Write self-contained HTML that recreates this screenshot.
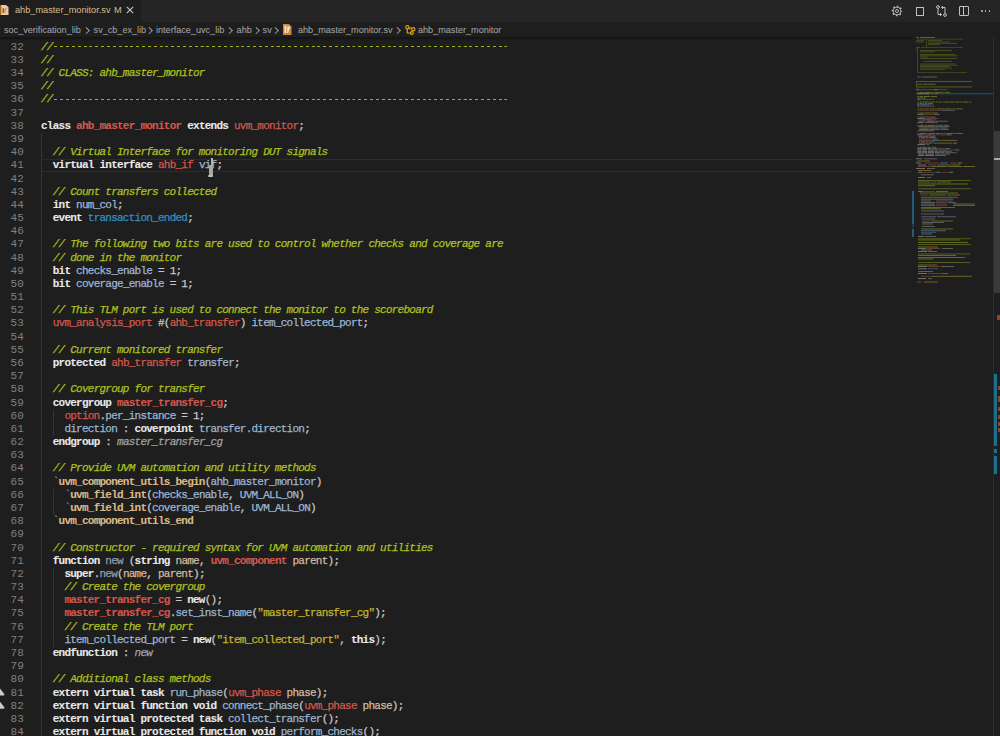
<!DOCTYPE html>
<html><head><meta charset="utf-8"><style>
html,body{margin:0;padding:0;width:1000px;height:736px;overflow:hidden;background:#1e1e1e;}
body{position:relative;font-family:"Liberation Sans",sans-serif;}
#tabs{position:absolute;left:0;top:0;width:1000px;height:22px;background:#252526;}
#tab{position:absolute;left:0;top:0;width:141px;height:22px;background:#1e1e1e;}
#crumbs{position:absolute;left:0;top:22px;width:1000px;height:15px;background:#1e1e1e;color:#a9a9a9;font-size:9.6px;white-space:nowrap;}
#shadow{position:absolute;left:0;top:36.5px;width:912px;height:4px;background:linear-gradient(#121212,#171717 40%,rgba(30,30,30,0));}
#code{position:absolute;left:0;top:0;width:1000px;height:736px;}
.ln{position:absolute;left:0;width:23.8px;text-align:right;font-family:"Liberation Mono",monospace;font-size:11px;line-height:13.18px;color:#808080;}
.cl{position:absolute;left:41px;font-family:"Liberation Mono",monospace;font-size:11px;line-height:13.18px;letter-spacing:-0.755px;color:#c8c8c8;white-space:pre;-webkit-text-stroke:0.25px currentColor;}
.c{color:#adc01e;font-style:italic;}
.k{color:#e8e8e8;font-weight:bold;-webkit-text-stroke:0.1px currentColor;}
.t{color:#d4574c;}
.tb{color:#d4574c;font-weight:bold;-webkit-text-stroke:0.1px currentColor;}
.v{color:#9db5d3;}
.e{color:#3190c4;}
.m{color:#dcb985;font-weight:bold;-webkit-text-stroke:0.1px currentColor;}
.bt{color:#808080;}
.s{color:#c8b330;}
.a{color:#d2b9a0;}
.f{color:#9cb4cf;}
.n{color:#8d9db0;}
.l{color:#a0a0a0;font-style:italic;}
.ig{position:absolute;width:1px;background:#353535;}
.curline{position:absolute;left:42px;width:870px;height:11px;border-top:1px solid #2c2c2c;border-bottom:1px solid #2c2c2c;}
.tabt{position:absolute;top:3.5px;font-size:9.2px;line-height:12px;color:#d9bd8e;white-space:nowrap;}
.bc{position:absolute;top:1.5px;font-size:9.1px;line-height:12px;color:#a9a9a9;white-space:nowrap;}
.chev{position:absolute;top:4.5px;width:3.5px;height:6px;}
.chev::before{content:"";position:absolute;left:-2.2px;top:1.3px;width:3.6px;height:3.6px;border-right:1px solid #a0a0a0;border-top:1px solid #a0a0a0;transform:rotate(45deg);}
.dash{display:inline-block;vertical-align:top;width:455.9px;height:13.18px;background:repeating-linear-gradient(90deg,transparent 0,transparent 1.3px,#9cb21d 1.5px,#9cb21d 4.4px,transparent 4.4px,transparent 5.845px) 0 5.4px/455.9px 1.3px no-repeat;}
#ruler{position:absolute;left:993px;top:37px;width:7px;height:699px;}

</style></head><body>
<div id="tabs">
  <div id="tab">
    <svg style="position:absolute;left:0;top:4.8px" width="9" height="10.3" viewBox="0 0 9 11" preserveAspectRatio="none">
      <path d="M0 0H6L8.5 2.5V11H0Z" fill="#e9c9a0"/>
      <rect x="0" y="0" width="1.2" height="11" fill="#8a7010"/>
      <path d="M2.5 3.5h1.6v5h-1.6z" fill="#b0453a"/>
      <path d="M5 3.5h1.8l-1.6 5h-1z" fill="#d09070"/>
    </svg>
    <span class="tabt" style="left:15px">ahb_master_monitor.sv</span>
    <span class="tabt" style="left:114px">M</span>
    <svg style="position:absolute;left:126px;top:6px" width="8" height="8" viewBox="0 0 8 8"><path d="M0.8 0.8L7.2 7.2M7.2 0.8L0.8 7.2" stroke="#c5c5c5" stroke-width="1.1"/></svg>
  </div>
  <svg style="position:absolute;left:891px;top:4.5px" width="12" height="12" viewBox="0 0 12 12">
    <g fill="none" stroke="#c0c0c0">
      <circle cx="6" cy="6" r="3.9" stroke-width="0.9"/>
      <circle cx="6" cy="6" r="4.7" stroke-width="1.3" stroke-dasharray="1.5 2.19" stroke-dashoffset="0.7"/>
      <circle cx="6" cy="6" r="1.5" stroke-width="0.9"/>
    </g>
  </svg>
  <div style="position:absolute;left:915.5px;top:6.5px;width:6.5px;height:7px;border:1px solid #c0c0c0"></div>
  <svg style="position:absolute;left:936px;top:5px" width="11" height="12" viewBox="0 0 11 12">
    <g fill="none" stroke="#c0c0c0" stroke-width="1">
      <circle cx="2" cy="2" r="1.4"/><circle cx="9" cy="10" r="1.4"/>
      <path d="M2 3.4V9.5H5.5M4 8l1.5 1.5L4 11"/>
      <path d="M9 8.6V2.5H5.5M7 4L5.5 2.5 7 1"/>
    </g>
  </svg>
  <div style="position:absolute;left:958.5px;top:5.5px;width:8.5px;height:8.5px;border:1px solid #c0c0c0;border-radius:1px"></div>
  <div style="position:absolute;left:963.2px;top:6px;width:1px;height:9px;background:#c0c0c0"></div>
  <div style="position:absolute;left:981px;top:10px;width:1.6px;height:1.6px;background:#c0c0c0;border-radius:1px"></div>
  <div style="position:absolute;left:984.8px;top:10px;width:1.6px;height:1.6px;background:#c0c0c0;border-radius:1px"></div>
  <div style="position:absolute;left:988.6px;top:10px;width:1.6px;height:1.6px;background:#c0c0c0;border-radius:1px"></div>
</div>
<div id="crumbs">
  <span class="bc" style="left:4px">soc_verification_lib</span>
  <span class="chev" style="left:86.5px"></span>
  <span class="bc" style="left:93.6px">sv_cb_ex_lib</span>
  <span class="chev" style="left:149px"></span>
  <span class="bc" style="left:156px">interface_uvc_lib</span>
  <span class="chev" style="left:229px"></span>
  <span class="bc" style="left:236.6px">ahb</span>
  <span class="chev" style="left:256px"></span>
  <span class="bc" style="left:262.6px">sv</span>
  <span class="chev" style="left:275px"></span>
  <svg style="position:absolute;left:283px;top:2px" width="8.5" height="11" viewBox="0 0 8.5 11">
    <path d="M0 0H6L8.5 2.5V11H0Z" fill="#c98540"/>
    <path d="M1.5 1.5h1.8v7.5h-1.8z" fill="#f5e6d0"/>
    <path d="M4.2 2.5h3l-2 6.5h-1z" fill="#f5e6d0"/>
  </svg>
  <span class="bc" style="left:298px">ahb_master_monitor.sv</span>
  <span class="chev" style="left:397.5px"></span>
  <svg style="position:absolute;left:405px;top:2.5px" width="11" height="10" viewBox="0 0 11 10">
    <g fill="none" stroke="#d6a51a" stroke-width="1.2">
      <circle cx="2.3" cy="2.3" r="1.6"/><circle cx="8.3" cy="4.3" r="1.6"/><circle cx="6.8" cy="8" r="1.4"/>
      <path d="M3.8 3H6.8M2.3 4V8H5.4"/>
    </g>
    <rect x="3.5" y="3.5" width="3" height="0.8" fill="#e07060"/>
  </svg>
  <span class="bc" style="left:418px">ahb_master_monitor</span>
</div>
<div id="shadow"></div>
<svg style="position:absolute;left:0;top:0" width="6" height="736">
  <path d="M0 688.5L4.5 694.2L4 695.5H0Z" fill="#c6cbd2"/>
  <path d="M0 701.7L4.5 707.4L4 708.7H0Z" fill="#c6cbd2"/>
</svg>

<div id="code">
<div class="ig" style="left:41.00px;top:132.96px;height:606.28px"></div><div class="ig" style="left:52.69px;top:409.74px;height:26.36px"></div><div class="ig" style="left:52.69px;top:488.82px;height:26.36px"></div><div class="ig" style="left:52.69px;top:567.90px;height:79.08px"></div>
<div class="curline" style="top:158.72px"></div>
<div class="ln" style="top:40.70px">32</div><div class="cl" style="top:40.70px"><span class="c">//</span><span class="dash"></span></div><div class="ln" style="top:53.88px">33</div><div class="cl" style="top:53.88px"><span class="c">//</span></div><div class="ln" style="top:67.06px">34</div><div class="cl" style="top:67.06px"><span class="c">// CLASS: ahb_master_monitor</span></div><div class="ln" style="top:80.24px">35</div><div class="cl" style="top:80.24px"><span class="c">//</span></div><div class="ln" style="top:93.42px">36</div><div class="cl" style="top:93.42px"><span class="c">//</span><span class="dash"></span></div><div class="ln" style="top:106.60px">37</div><div class="cl" style="top:106.60px"></div><div class="ln" style="top:119.78px">38</div><div class="cl" style="top:119.78px"><span class="k">class</span> <span class="tb">ahb_master_monitor</span> <span class="k">extends</span> <span class="t">uvm_monitor</span>;</div><div class="ln" style="top:132.96px">39</div><div class="cl" style="top:132.96px"></div><div class="ln" style="top:146.14px">40</div><div class="cl" style="top:146.14px">  <span class="c">// Virtual Interface for monitoring DUT signals</span></div><div class="ln" style="top:159.32px">41</div><div class="cl" style="top:159.32px">  <span class="k">virtual</span> <span class="k">interface</span> <span class="t">ahb_if</span> <span class="v">vif</span>;</div><div class="ln" style="top:172.50px">42</div><div class="cl" style="top:172.50px"></div><div class="ln" style="top:185.68px">43</div><div class="cl" style="top:185.68px">  <span class="c">// Count transfers collected</span></div><div class="ln" style="top:198.86px">44</div><div class="cl" style="top:198.86px">  <span class="k">int</span> <span class="v">num_col</span>;</div><div class="ln" style="top:212.04px">45</div><div class="cl" style="top:212.04px">  <span class="k">event</span> <span class="e">transaction_ended</span>;</div><div class="ln" style="top:225.22px">46</div><div class="cl" style="top:225.22px"></div><div class="ln" style="top:238.40px">47</div><div class="cl" style="top:238.40px">  <span class="c">// The following two bits are used to control whether checks and coverage are</span></div><div class="ln" style="top:251.58px">48</div><div class="cl" style="top:251.58px">  <span class="c">// done in the monitor</span></div><div class="ln" style="top:264.76px">49</div><div class="cl" style="top:264.76px">  <span class="k">bit</span> <span class="v">checks_enable</span> = 1;</div><div class="ln" style="top:277.94px">50</div><div class="cl" style="top:277.94px">  <span class="k">bit</span> <span class="v">coverage_enable</span> = 1;</div><div class="ln" style="top:291.12px">51</div><div class="cl" style="top:291.12px"></div><div class="ln" style="top:304.30px">52</div><div class="cl" style="top:304.30px">  <span class="c">// This TLM port is used to connect the monitor to the scoreboard</span></div><div class="ln" style="top:317.48px">53</div><div class="cl" style="top:317.48px">  <span class="t">uvm_analysis_port</span> #(<span class="t">ahb_transfer</span>) <span class="v">item_collected_port</span>;</div><div class="ln" style="top:330.66px">54</div><div class="cl" style="top:330.66px"></div><div class="ln" style="top:343.84px">55</div><div class="cl" style="top:343.84px">  <span class="c">// Current monitored transfer</span></div><div class="ln" style="top:357.02px">56</div><div class="cl" style="top:357.02px">  <span class="k">protected</span> <span class="t">ahb_transfer</span> <span class="v">transfer</span>;</div><div class="ln" style="top:370.20px">57</div><div class="cl" style="top:370.20px"></div><div class="ln" style="top:383.38px">58</div><div class="cl" style="top:383.38px">  <span class="c">// Covergroup for transfer</span></div><div class="ln" style="top:396.56px">59</div><div class="cl" style="top:396.56px">  <span class="k">covergroup</span> <span class="tb">master_transfer_cg</span>;</div><div class="ln" style="top:409.74px">60</div><div class="cl" style="top:409.74px">    <span class="t">option</span>.<span class="v">per_instance</span> = 1;</div><div class="ln" style="top:422.92px">61</div><div class="cl" style="top:422.92px">    <span class="v">direction</span> : <span class="k">coverpoint</span> <span class="v">transfer.direction</span>;</div><div class="ln" style="top:436.10px">62</div><div class="cl" style="top:436.10px">  <span class="k">endgroup</span> : <span class="l">master_transfer_cg</span></div><div class="ln" style="top:449.28px">63</div><div class="cl" style="top:449.28px"></div><div class="ln" style="top:462.46px">64</div><div class="cl" style="top:462.46px">  <span class="c">// Provide UVM automation and utility methods</span></div><div class="ln" style="top:475.64px">65</div><div class="cl" style="top:475.64px">  <span class="bt">`</span><span class="m">uvm_component_utils_begin</span>(<span class="v">ahb_master_monitor</span>)</div><div class="ln" style="top:488.82px">66</div><div class="cl" style="top:488.82px">    <span class="bt">`</span><span class="m">uvm_field_int</span>(<span class="v">checks_enable</span>, <span class="v">UVM_ALL_ON</span>)</div><div class="ln" style="top:502.00px">67</div><div class="cl" style="top:502.00px">    <span class="bt">`</span><span class="m">uvm_field_int</span>(<span class="v">coverage_enable</span>, <span class="v">UVM_ALL_ON</span>)</div><div class="ln" style="top:515.18px">68</div><div class="cl" style="top:515.18px">  <span class="bt">`</span><span class="m">uvm_component_utils_end</span></div><div class="ln" style="top:528.36px">69</div><div class="cl" style="top:528.36px"></div><div class="ln" style="top:541.54px">70</div><div class="cl" style="top:541.54px">  <span class="c">// Constructor - required syntax for UVM automation and utilities</span></div><div class="ln" style="top:554.72px">71</div><div class="cl" style="top:554.72px">  <span class="k">function</span> <span class="n">new</span> (<span class="k">string</span> <span class="a">name</span>, <span class="tb">uvm_component</span> <span class="a">parent</span>);</div><div class="ln" style="top:567.90px">72</div><div class="cl" style="top:567.90px">    <span class="k">super</span>.<span class="n">new</span>(<span class="a">name</span>, <span class="a">parent</span>);</div><div class="ln" style="top:581.08px">73</div><div class="cl" style="top:581.08px">    <span class="c">// Create the covergroup</span></div><div class="ln" style="top:594.26px">74</div><div class="cl" style="top:594.26px">    <span class="tb">master_transfer_cg</span> = <span class="k">new</span>();</div><div class="ln" style="top:607.44px">75</div><div class="cl" style="top:607.44px">    <span class="tb">master_transfer_cg</span>.<span class="f">set_inst_name</span>(<span class="s">&quot;master_transfer_cg&quot;</span>);</div><div class="ln" style="top:620.62px">76</div><div class="cl" style="top:620.62px">    <span class="c">// Create the TLM port</span></div><div class="ln" style="top:633.80px">77</div><div class="cl" style="top:633.80px">    <span class="v">item_collected_port</span> = <span class="k">new</span>(<span class="s">&quot;item_collected_port&quot;</span>, <span class="k">this</span>);</div><div class="ln" style="top:646.98px">78</div><div class="cl" style="top:646.98px">  <span class="k">endfunction</span> : <span class="l">new</span></div><div class="ln" style="top:660.16px">79</div><div class="cl" style="top:660.16px"></div><div class="ln" style="top:673.34px">80</div><div class="cl" style="top:673.34px">  <span class="c">// Additional class methods</span></div><div class="ln" style="top:686.52px">81</div><div class="cl" style="top:686.52px">  <span class="k">extern virtual task</span> <span class="f">run_phase</span>(<span class="t">uvm_phase</span> <span class="a">phase</span>);</div><div class="ln" style="top:699.70px">82</div><div class="cl" style="top:699.70px">  <span class="k">extern virtual function void</span> <span class="f">connect_phase</span>(<span class="t">uvm_phase</span> <span class="a">phase</span>);</div><div class="ln" style="top:712.88px">83</div><div class="cl" style="top:712.88px">  <span class="k">extern virtual protected task</span> <span class="f">collect_transfer</span>();</div><div class="ln" style="top:726.06px">84</div><div class="cl" style="top:726.06px">  <span class="k">extern virtual protected function void</span> <span class="f">perform_checks</span>();</div>
</div>
<svg id="mm" width="1000" height="736" style="position:absolute;left:0;top:0"><rect x="916" y="93.1" width="77" height="1.3" fill="#22466a"/><g opacity="0.62"><rect x="916.00" y="80.99" width="1.40" height="0.95" fill="#8ea21c"/><rect x="917.40" y="81.07" width="54.60" height="0.8" fill="#8a9e1a"/><rect x="916.00" y="82.36" width="1.40" height="0.95" fill="#8ea21c"/><rect x="916.00" y="83.73" width="1.40" height="0.95" fill="#8ea21c"/><rect x="918.10" y="83.73" width="4.20" height="0.95" fill="#8ea21c"/><rect x="923.00" y="83.73" width="12.60" height="0.95" fill="#8ea21c"/><rect x="916.00" y="85.10" width="1.40" height="0.95" fill="#8ea21c"/><rect x="916.00" y="86.47" width="1.40" height="0.95" fill="#8ea21c"/><rect x="917.40" y="86.55" width="54.60" height="0.8" fill="#8a9e1a"/><rect x="916.00" y="89.21" width="3.50" height="0.95" fill="#a8a8a8"/><rect x="920.20" y="89.21" width="12.60" height="0.95" fill="#a44a40"/><rect x="933.50" y="89.21" width="4.90" height="0.95" fill="#a8a8a8"/><rect x="939.10" y="89.21" width="7.70" height="0.95" fill="#a44a40"/><rect x="946.80" y="89.21" width="0.70" height="0.95" fill="#8a8a8a"/><rect x="917.40" y="91.95" width="1.40" height="0.95" fill="#8ea21c"/><rect x="919.50" y="91.95" width="4.90" height="0.95" fill="#8ea21c"/><rect x="925.10" y="91.95" width="6.30" height="0.95" fill="#8ea21c"/><rect x="932.10" y="91.95" width="2.10" height="0.95" fill="#8ea21c"/><rect x="934.90" y="91.95" width="7.00" height="0.95" fill="#8ea21c"/><rect x="942.60" y="91.95" width="2.10" height="0.95" fill="#8ea21c"/><rect x="945.40" y="91.95" width="4.90" height="0.95" fill="#8ea21c"/><rect x="917.40" y="93.32" width="4.90" height="0.95" fill="#a8a8a8"/><rect x="923.00" y="93.32" width="6.30" height="0.95" fill="#a8a8a8"/><rect x="930.00" y="93.32" width="4.20" height="0.95" fill="#a44a40"/><rect x="934.90" y="93.32" width="2.10" height="0.95" fill="#7a8ea5"/><rect x="937.00" y="93.32" width="0.70" height="0.95" fill="#8a8a8a"/><rect x="917.40" y="96.06" width="1.40" height="0.95" fill="#8ea21c"/><rect x="919.50" y="96.06" width="3.50" height="0.95" fill="#8ea21c"/><rect x="923.70" y="96.06" width="6.30" height="0.95" fill="#8ea21c"/><rect x="930.70" y="96.06" width="6.30" height="0.95" fill="#8ea21c"/><rect x="917.40" y="97.43" width="2.10" height="0.95" fill="#a8a8a8"/><rect x="920.20" y="97.43" width="4.90" height="0.95" fill="#7a8ea5"/><rect x="925.10" y="97.43" width="0.70" height="0.95" fill="#8a8a8a"/><rect x="917.40" y="98.80" width="3.50" height="0.95" fill="#a8a8a8"/><rect x="921.60" y="98.80" width="11.90" height="0.95" fill="#3a7fb0"/><rect x="933.50" y="98.80" width="0.70" height="0.95" fill="#8a8a8a"/><rect x="917.40" y="101.54" width="1.40" height="0.95" fill="#8ea21c"/><rect x="919.50" y="101.54" width="2.10" height="0.95" fill="#8ea21c"/><rect x="922.30" y="101.54" width="6.30" height="0.95" fill="#8ea21c"/><rect x="929.30" y="101.54" width="2.10" height="0.95" fill="#8ea21c"/><rect x="932.10" y="101.54" width="2.80" height="0.95" fill="#8ea21c"/><rect x="935.60" y="101.54" width="2.10" height="0.95" fill="#8ea21c"/><rect x="938.40" y="101.54" width="2.80" height="0.95" fill="#8ea21c"/><rect x="941.90" y="101.54" width="1.40" height="0.95" fill="#8ea21c"/><rect x="944.00" y="101.54" width="4.90" height="0.95" fill="#8ea21c"/><rect x="949.60" y="101.54" width="4.90" height="0.95" fill="#8ea21c"/><rect x="955.20" y="101.54" width="4.20" height="0.95" fill="#8ea21c"/><rect x="960.10" y="101.54" width="2.10" height="0.95" fill="#8ea21c"/><rect x="962.90" y="101.54" width="5.60" height="0.95" fill="#8ea21c"/><rect x="969.20" y="101.54" width="2.10" height="0.95" fill="#8ea21c"/><rect x="917.40" y="102.91" width="1.40" height="0.95" fill="#8ea21c"/><rect x="919.50" y="102.91" width="2.80" height="0.95" fill="#8ea21c"/><rect x="923.00" y="102.91" width="1.40" height="0.95" fill="#8ea21c"/><rect x="925.10" y="102.91" width="2.10" height="0.95" fill="#8ea21c"/><rect x="927.90" y="102.91" width="4.90" height="0.95" fill="#8ea21c"/><rect x="917.40" y="104.28" width="2.10" height="0.95" fill="#a8a8a8"/><rect x="920.20" y="104.28" width="9.10" height="0.95" fill="#7a8ea5"/><rect x="930.00" y="104.28" width="0.70" height="0.95" fill="#8a8a8a"/><rect x="931.40" y="104.28" width="1.40" height="0.95" fill="#8a8a8a"/><rect x="917.40" y="105.65" width="2.10" height="0.95" fill="#a8a8a8"/><rect x="920.20" y="105.65" width="10.50" height="0.95" fill="#7a8ea5"/><rect x="931.40" y="105.65" width="0.70" height="0.95" fill="#8a8a8a"/><rect x="932.80" y="105.65" width="1.40" height="0.95" fill="#8a8a8a"/><rect x="917.40" y="108.39" width="1.40" height="0.95" fill="#8ea21c"/><rect x="919.50" y="108.39" width="2.80" height="0.95" fill="#8ea21c"/><rect x="923.00" y="108.39" width="2.10" height="0.95" fill="#8ea21c"/><rect x="925.80" y="108.39" width="2.80" height="0.95" fill="#8ea21c"/><rect x="929.30" y="108.39" width="1.40" height="0.95" fill="#8ea21c"/><rect x="931.40" y="108.39" width="2.80" height="0.95" fill="#8ea21c"/><rect x="934.90" y="108.39" width="1.40" height="0.95" fill="#8ea21c"/><rect x="937.00" y="108.39" width="4.90" height="0.95" fill="#8ea21c"/><rect x="942.60" y="108.39" width="2.10" height="0.95" fill="#8ea21c"/><rect x="945.40" y="108.39" width="4.90" height="0.95" fill="#8ea21c"/><rect x="951.00" y="108.39" width="1.40" height="0.95" fill="#8ea21c"/><rect x="953.10" y="108.39" width="2.10" height="0.95" fill="#8ea21c"/><rect x="955.90" y="108.39" width="7.00" height="0.95" fill="#8ea21c"/><rect x="917.40" y="109.76" width="11.90" height="0.95" fill="#a44a40"/><rect x="930.00" y="109.76" width="1.40" height="0.95" fill="#8a8a8a"/><rect x="931.40" y="109.76" width="8.40" height="0.95" fill="#a44a40"/><rect x="939.80" y="109.76" width="0.70" height="0.95" fill="#8a8a8a"/><rect x="941.20" y="109.76" width="13.30" height="0.95" fill="#7a8ea5"/><rect x="954.50" y="109.76" width="0.70" height="0.95" fill="#8a8a8a"/><rect x="917.40" y="112.50" width="1.40" height="0.95" fill="#8ea21c"/><rect x="919.50" y="112.50" width="4.90" height="0.95" fill="#8ea21c"/><rect x="925.10" y="112.50" width="6.30" height="0.95" fill="#8ea21c"/><rect x="932.10" y="112.50" width="5.60" height="0.95" fill="#8ea21c"/><rect x="917.40" y="113.87" width="6.30" height="0.95" fill="#a8a8a8"/><rect x="924.40" y="113.87" width="8.40" height="0.95" fill="#a44a40"/><rect x="933.50" y="113.87" width="5.60" height="0.95" fill="#7a8ea5"/><rect x="939.10" y="113.87" width="0.70" height="0.95" fill="#8a8a8a"/><rect x="917.40" y="116.61" width="1.40" height="0.95" fill="#8ea21c"/><rect x="919.50" y="116.61" width="7.00" height="0.95" fill="#8ea21c"/><rect x="927.20" y="116.61" width="2.10" height="0.95" fill="#8ea21c"/><rect x="930.00" y="116.61" width="5.60" height="0.95" fill="#8ea21c"/><rect x="917.40" y="117.98" width="7.00" height="0.95" fill="#a8a8a8"/><rect x="925.10" y="117.98" width="12.60" height="0.95" fill="#a44a40"/><rect x="937.70" y="117.98" width="0.70" height="0.95" fill="#8a8a8a"/><rect x="918.80" y="119.35" width="4.20" height="0.95" fill="#a44a40"/><rect x="923.00" y="119.35" width="0.70" height="0.95" fill="#8a8a8a"/><rect x="923.70" y="119.35" width="8.40" height="0.95" fill="#7a8ea5"/><rect x="932.80" y="119.35" width="0.70" height="0.95" fill="#8a8a8a"/><rect x="934.20" y="119.35" width="1.40" height="0.95" fill="#8a8a8a"/><rect x="918.80" y="120.72" width="6.30" height="0.95" fill="#7a8ea5"/><rect x="925.80" y="120.72" width="0.70" height="0.95" fill="#8a8a8a"/><rect x="927.20" y="120.72" width="7.00" height="0.95" fill="#a8a8a8"/><rect x="934.90" y="120.72" width="12.60" height="0.95" fill="#7a8ea5"/><rect x="947.50" y="120.72" width="0.70" height="0.95" fill="#8a8a8a"/><rect x="917.40" y="122.09" width="5.60" height="0.95" fill="#a8a8a8"/><rect x="923.70" y="122.09" width="0.70" height="0.95" fill="#8a8a8a"/><rect x="925.10" y="122.09" width="12.60" height="0.95" fill="#808080"/><rect x="917.40" y="124.83" width="1.40" height="0.95" fill="#8ea21c"/><rect x="919.50" y="124.83" width="4.90" height="0.95" fill="#8ea21c"/><rect x="925.10" y="124.83" width="2.10" height="0.95" fill="#8ea21c"/><rect x="927.90" y="124.83" width="7.00" height="0.95" fill="#8ea21c"/><rect x="935.60" y="124.83" width="2.10" height="0.95" fill="#8ea21c"/><rect x="938.40" y="124.83" width="4.90" height="0.95" fill="#8ea21c"/><rect x="944.00" y="124.83" width="4.90" height="0.95" fill="#8ea21c"/><rect x="917.40" y="126.20" width="0.70" height="0.95" fill="#666"/><rect x="918.10" y="126.20" width="17.50" height="0.95" fill="#a8906a"/><rect x="935.60" y="126.20" width="0.70" height="0.95" fill="#8a8a8a"/><rect x="936.30" y="126.20" width="12.60" height="0.95" fill="#7a8ea5"/><rect x="948.90" y="126.20" width="0.70" height="0.95" fill="#8a8a8a"/><rect x="918.80" y="127.57" width="0.70" height="0.95" fill="#666"/><rect x="919.50" y="127.57" width="9.10" height="0.95" fill="#a8906a"/><rect x="928.60" y="127.57" width="0.70" height="0.95" fill="#8a8a8a"/><rect x="929.30" y="127.57" width="9.10" height="0.95" fill="#7a8ea5"/><rect x="938.40" y="127.57" width="0.70" height="0.95" fill="#8a8a8a"/><rect x="939.80" y="127.57" width="7.00" height="0.95" fill="#7a8ea5"/><rect x="946.80" y="127.57" width="0.70" height="0.95" fill="#8a8a8a"/><rect x="918.80" y="128.94" width="0.70" height="0.95" fill="#666"/><rect x="919.50" y="128.94" width="9.10" height="0.95" fill="#a8906a"/><rect x="928.60" y="128.94" width="0.70" height="0.95" fill="#8a8a8a"/><rect x="929.30" y="128.94" width="10.50" height="0.95" fill="#7a8ea5"/><rect x="939.80" y="128.94" width="0.70" height="0.95" fill="#8a8a8a"/><rect x="941.20" y="128.94" width="7.00" height="0.95" fill="#7a8ea5"/><rect x="948.20" y="128.94" width="0.70" height="0.95" fill="#8a8a8a"/><rect x="917.40" y="130.31" width="0.70" height="0.95" fill="#666"/><rect x="918.10" y="130.31" width="16.10" height="0.95" fill="#a8906a"/><rect x="917.40" y="133.05" width="1.40" height="0.95" fill="#8ea21c"/><rect x="919.50" y="133.05" width="7.70" height="0.95" fill="#8ea21c"/><rect x="927.90" y="133.05" width="0.70" height="0.95" fill="#8ea21c"/><rect x="929.30" y="133.05" width="5.60" height="0.95" fill="#8ea21c"/><rect x="935.60" y="133.05" width="4.20" height="0.95" fill="#8ea21c"/><rect x="940.50" y="133.05" width="2.10" height="0.95" fill="#8ea21c"/><rect x="943.30" y="133.05" width="2.10" height="0.95" fill="#8ea21c"/><rect x="946.10" y="133.05" width="7.00" height="0.95" fill="#8ea21c"/><rect x="953.80" y="133.05" width="2.10" height="0.95" fill="#8ea21c"/><rect x="956.60" y="133.05" width="6.30" height="0.95" fill="#8ea21c"/><rect x="917.40" y="134.42" width="5.60" height="0.95" fill="#a8a8a8"/><rect x="923.70" y="134.42" width="2.10" height="0.95" fill="#7a8ea5"/><rect x="926.50" y="134.42" width="0.70" height="0.95" fill="#8a8a8a"/><rect x="927.20" y="134.42" width="4.20" height="0.95" fill="#a8a8a8"/><rect x="932.10" y="134.42" width="2.80" height="0.95" fill="#a09080"/><rect x="934.90" y="134.42" width="0.70" height="0.95" fill="#8a8a8a"/><rect x="936.30" y="134.42" width="9.10" height="0.95" fill="#a44a40"/><rect x="946.10" y="134.42" width="4.20" height="0.95" fill="#a09080"/><rect x="950.30" y="134.42" width="1.40" height="0.95" fill="#8a8a8a"/><rect x="918.80" y="135.79" width="3.50" height="0.95" fill="#a8a8a8"/><rect x="922.30" y="135.79" width="0.70" height="0.95" fill="#8a8a8a"/><rect x="923.00" y="135.79" width="2.10" height="0.95" fill="#7a8ea5"/><rect x="925.10" y="135.79" width="0.70" height="0.95" fill="#8a8a8a"/><rect x="925.80" y="135.79" width="2.80" height="0.95" fill="#a09080"/><rect x="928.60" y="135.79" width="0.70" height="0.95" fill="#8a8a8a"/><rect x="930.00" y="135.79" width="4.20" height="0.95" fill="#a09080"/><rect x="934.20" y="135.79" width="1.40" height="0.95" fill="#8a8a8a"/><rect x="918.80" y="137.16" width="1.40" height="0.95" fill="#8ea21c"/><rect x="920.90" y="137.16" width="4.20" height="0.95" fill="#8ea21c"/><rect x="925.80" y="137.16" width="2.10" height="0.95" fill="#8ea21c"/><rect x="928.60" y="137.16" width="7.00" height="0.95" fill="#8ea21c"/><rect x="918.80" y="138.53" width="12.60" height="0.95" fill="#a44a40"/><rect x="932.10" y="138.53" width="0.70" height="0.95" fill="#8a8a8a"/><rect x="933.50" y="138.53" width="2.10" height="0.95" fill="#a8a8a8"/><rect x="935.60" y="138.53" width="2.10" height="0.95" fill="#8a8a8a"/><rect x="918.80" y="139.90" width="12.60" height="0.95" fill="#a44a40"/><rect x="931.40" y="139.90" width="0.70" height="0.95" fill="#8a8a8a"/><rect x="932.10" y="139.90" width="9.10" height="0.95" fill="#7a8ea5"/><rect x="941.20" y="139.90" width="0.70" height="0.95" fill="#8a8a8a"/><rect x="941.90" y="139.90" width="14.00" height="0.95" fill="#a0952a"/><rect x="955.90" y="139.90" width="1.40" height="0.95" fill="#8a8a8a"/><rect x="918.80" y="141.27" width="1.40" height="0.95" fill="#8ea21c"/><rect x="920.90" y="141.27" width="4.20" height="0.95" fill="#8ea21c"/><rect x="925.80" y="141.27" width="2.10" height="0.95" fill="#8ea21c"/><rect x="928.60" y="141.27" width="2.10" height="0.95" fill="#8ea21c"/><rect x="931.40" y="141.27" width="2.80" height="0.95" fill="#8ea21c"/><rect x="918.80" y="142.64" width="13.30" height="0.95" fill="#7a8ea5"/><rect x="932.80" y="142.64" width="0.70" height="0.95" fill="#8a8a8a"/><rect x="934.20" y="142.64" width="2.10" height="0.95" fill="#a8a8a8"/><rect x="936.30" y="142.64" width="0.70" height="0.95" fill="#8a8a8a"/><rect x="937.00" y="142.64" width="14.70" height="0.95" fill="#a0952a"/><rect x="951.70" y="142.64" width="0.70" height="0.95" fill="#8a8a8a"/><rect x="953.10" y="142.64" width="2.80" height="0.95" fill="#a8a8a8"/><rect x="955.90" y="142.64" width="1.40" height="0.95" fill="#8a8a8a"/><rect x="917.40" y="144.01" width="7.70" height="0.95" fill="#a8a8a8"/><rect x="925.80" y="144.01" width="0.70" height="0.95" fill="#8a8a8a"/><rect x="927.20" y="144.01" width="2.10" height="0.95" fill="#808080"/><rect x="917.40" y="146.75" width="1.40" height="0.95" fill="#8ea21c"/><rect x="919.50" y="146.75" width="7.00" height="0.95" fill="#8ea21c"/><rect x="927.20" y="146.75" width="3.50" height="0.95" fill="#8ea21c"/><rect x="931.40" y="146.75" width="4.90" height="0.95" fill="#8ea21c"/><rect x="917.40" y="148.12" width="4.20" height="0.95" fill="#a8a8a8"/><rect x="922.30" y="148.12" width="4.90" height="0.95" fill="#a8a8a8"/><rect x="927.90" y="148.12" width="2.80" height="0.95" fill="#a8a8a8"/><rect x="931.40" y="148.12" width="6.30" height="0.95" fill="#7a8ea5"/><rect x="937.70" y="148.12" width="0.70" height="0.95" fill="#8a8a8a"/><rect x="938.40" y="148.12" width="6.30" height="0.95" fill="#a44a40"/><rect x="945.40" y="148.12" width="3.50" height="0.95" fill="#a09080"/><rect x="948.90" y="148.12" width="1.40" height="0.95" fill="#8a8a8a"/><rect x="917.40" y="149.49" width="4.20" height="0.95" fill="#a8a8a8"/><rect x="922.30" y="149.49" width="4.90" height="0.95" fill="#a8a8a8"/><rect x="927.90" y="149.49" width="5.60" height="0.95" fill="#a8a8a8"/><rect x="934.20" y="149.49" width="2.80" height="0.95" fill="#a8a8a8"/><rect x="937.70" y="149.49" width="9.10" height="0.95" fill="#7a8ea5"/><rect x="946.80" y="149.49" width="0.70" height="0.95" fill="#8a8a8a"/><rect x="947.50" y="149.49" width="6.30" height="0.95" fill="#a44a40"/><rect x="954.50" y="149.49" width="3.50" height="0.95" fill="#a09080"/><rect x="958.00" y="149.49" width="1.40" height="0.95" fill="#8a8a8a"/><rect x="917.40" y="150.86" width="4.20" height="0.95" fill="#a8a8a8"/><rect x="922.30" y="150.86" width="4.90" height="0.95" fill="#a8a8a8"/><rect x="927.90" y="150.86" width="6.30" height="0.95" fill="#a8a8a8"/><rect x="934.90" y="150.86" width="2.80" height="0.95" fill="#a8a8a8"/><rect x="938.40" y="150.86" width="11.20" height="0.95" fill="#7a8ea5"/><rect x="949.60" y="150.86" width="2.10" height="0.95" fill="#8a8a8a"/><rect x="917.40" y="152.23" width="4.20" height="0.95" fill="#a8a8a8"/><rect x="922.30" y="152.23" width="4.90" height="0.95" fill="#a8a8a8"/><rect x="927.90" y="152.23" width="6.30" height="0.95" fill="#a8a8a8"/><rect x="934.90" y="152.23" width="5.60" height="0.95" fill="#a8a8a8"/><rect x="941.20" y="152.23" width="2.80" height="0.95" fill="#a8a8a8"/><rect x="944.70" y="152.23" width="9.80" height="0.95" fill="#7a8ea5"/><rect x="954.50" y="152.23" width="2.10" height="0.95" fill="#8a8a8a"/><rect x="916" y="37.02" width="3" height="0.95" fill="#8ea21c"/><rect x="920" y="37.02" width="15" height="0.95" fill="#8ea21c"/><rect x="917" y="38.80" width="46" height="0.8" fill="#8a9e1a" opacity="0.6"/><rect x="916" y="40.12" width="8" height="0.95" fill="#8ea21c" opacity="0.6"/><rect x="928" y="40.12" width="14" height="0.95" fill="#8ea21c" opacity="0.6"/><rect x="916" y="41.52" width="8" height="0.95" fill="#8ea21c" opacity="0.6"/><rect x="928" y="41.52" width="22" height="0.95" fill="#8ea21c" opacity="0.6"/><rect x="928" y="42.82" width="29" height="0.95" fill="#8ea21c" opacity="0.6"/><rect x="928" y="44.12" width="12" height="0.95" fill="#8ea21c" opacity="0.6"/><rect x="916" y="47.02" width="4" height="0.95" fill="#8ea21c" opacity="0.6"/><rect x="921" y="47.10" width="42" height="0.8" fill="#8a9e1a" opacity="0.6"/><rect x="916" y="48.42" width="2" height="0.95" fill="#8ea21c" opacity="0.6"/><rect x="920" y="50.02" width="32" height="0.95" fill="#8ea21c" opacity="0.6"/><rect x="920" y="51.32" width="15" height="0.95" fill="#8ea21c" opacity="0.6"/><rect x="920" y="54.02" width="35" height="0.95" fill="#8ea21c" opacity="0.6"/><rect x="920" y="55.32" width="38" height="0.95" fill="#8ea21c" opacity="0.6"/><rect x="920" y="56.62" width="8" height="0.95" fill="#8ea21c" opacity="0.6"/><rect x="920" y="58.02" width="37" height="0.95" fill="#8ea21c" opacity="0.6"/><rect x="923" y="60.82" width="29" height="0.95" fill="#8ea21c" opacity="0.6"/><rect x="920" y="63.52" width="35" height="0.95" fill="#8ea21c" opacity="0.6"/><rect x="920" y="64.82" width="38" height="0.95" fill="#8ea21c" opacity="0.6"/><rect x="920" y="66.12" width="29" height="0.95" fill="#8ea21c" opacity="0.6"/><rect x="920" y="67.52" width="32" height="0.95" fill="#8ea21c" opacity="0.6"/><rect x="920" y="68.82" width="25" height="0.95" fill="#8ea21c" opacity="0.6"/><rect x="917" y="72.10" width="50" height="0.8" fill="#8a9e1a" opacity="0.6"/><rect x="917" y="76.52" width="4" height="0.95" fill="#9a7a7a"/><rect x="922" y="76.52" width="15" height="0.95" fill="#7a8ea5"/><rect x="918" y="153.62" width="6" height="0.95" fill="#a8a8a8"/><rect x="925" y="153.62" width="9" height="0.95" fill="#a8a8a8"/><rect x="935" y="153.62" width="15" height="0.95" fill="#7a8ea5"/><rect x="918" y="155.02" width="6" height="0.95" fill="#a8a8a8"/><rect x="925" y="155.02" width="9" height="0.95" fill="#a8a8a8"/><rect x="935" y="155.02" width="11" height="0.95" fill="#7a8ea5"/><rect x="916" y="158.32" width="6" height="0.95" fill="#a8a8a8"/><rect x="924" y="158.32" width="13" height="0.95" fill="#8a8a8a"/><rect x="917" y="160.52" width="13" height="0.95" fill="#8ea21c"/><rect x="916" y="162.52" width="5" height="0.95" fill="#a8a8a8"/><rect x="924" y="162.52" width="15" height="0.95" fill="#a44a40"/><rect x="940" y="162.52" width="8" height="0.95" fill="#7a8ea5"/><rect x="950" y="162.52" width="7" height="0.95" fill="#a44a40"/><rect x="958" y="162.52" width="4" height="0.95" fill="#a8a8a8"/><rect x="918" y="164.52" width="8" height="0.95" fill="#a8a8a8"/><rect x="928" y="164.52" width="8" height="0.95" fill="#a44a40"/><rect x="937" y="164.52" width="13" height="0.95" fill="#7a8ea5"/><rect x="951" y="164.52" width="9" height="0.95" fill="#a0952a"/><rect x="918" y="166.02" width="12" height="0.95" fill="#a44a40"/><rect x="931" y="166.02" width="16" height="0.95" fill="#a0952a"/><rect x="948" y="166.02" width="14" height="0.95" fill="#a0952a"/><rect x="963" y="166.02" width="12" height="0.95" fill="#a0952a"/><rect x="916" y="168.02" width="9" height="0.95" fill="#a8a8a8"/><rect x="927" y="168.02" width="8" height="0.95" fill="#8a8a8a"/><rect x="918" y="170.02" width="13" height="0.95" fill="#8ea21c"/><rect x="918" y="171.82" width="4" height="0.95" fill="#a8a8a8"/><rect x="922" y="171.82" width="12" height="0.95" fill="#a44a40"/><rect x="935" y="171.82" width="6" height="0.95" fill="#7a8ea5"/><rect x="942" y="171.82" width="6" height="0.95" fill="#a44a40"/><rect x="949" y="171.82" width="4" height="0.95" fill="#a8a8a8"/><rect x="921" y="174.32" width="13" height="0.95" fill="#8a8a8a"/><rect x="918" y="177.02" width="7" height="0.95" fill="#a8a8a8"/><rect x="927" y="177.02" width="4" height="0.95" fill="#8a8a8a"/><rect x="918" y="180.10" width="53" height="0.8" fill="#8a9e1a"/><rect x="918" y="181.52" width="12" height="0.95" fill="#8ea21c"/><rect x="931" y="181.52" width="5" height="0.95" fill="#3a7fb0"/><rect x="937" y="181.52" width="14" height="0.95" fill="#8ea21c"/><rect x="918" y="183.52" width="50" height="0.95" fill="#8ea21c"/><rect x="918" y="185.22" width="17" height="0.95" fill="#8ea21c"/><rect x="918" y="188.40" width="53" height="0.8" fill="#8a9e1a"/><rect x="918" y="191.02" width="4" height="0.95" fill="#a8a8a8"/><rect x="922" y="191.02" width="13" height="0.95" fill="#a44a40"/><rect x="936" y="191.02" width="12" height="0.95" fill="#7a8ea5"/><rect x="920" y="192.52" width="38" height="0.95" fill="#8ea21c"/><rect x="920" y="194.52" width="8" height="0.95" fill="#a44a40"/><rect x="929" y="194.52" width="17" height="0.95" fill="#8ea21c"/><rect x="947" y="194.52" width="13" height="0.95" fill="#a0952a"/><rect x="921" y="196.82" width="34" height="0.95" fill="#8a8a8a"/><rect x="955" y="196.82" width="3" height="0.95" fill="#c07a30"/><rect x="921" y="198.72" width="32" height="0.95" fill="#8ea21c"/><rect x="921" y="200.52" width="10" height="0.95" fill="#8a8a8a"/><rect x="936" y="200.52" width="17" height="0.95" fill="#3a7fb0"/><rect x="921" y="202.12" width="14" height="0.95" fill="#8a8a8a"/><rect x="936" y="202.12" width="11" height="0.95" fill="#a44a40"/><rect x="948" y="202.12" width="8" height="0.95" fill="#8a8a8a"/><rect x="921" y="203.52" width="14" height="0.95" fill="#8a8a8a"/><rect x="936" y="203.52" width="11" height="0.95" fill="#a44a40"/><rect x="953" y="203.52" width="22" height="0.95" fill="#a0952a"/><rect x="921" y="204.92" width="14" height="0.95" fill="#8a8a8a"/><rect x="936" y="204.92" width="11" height="0.95" fill="#a44a40"/><rect x="953" y="204.92" width="22" height="0.95" fill="#a0952a"/><rect x="921" y="207.02" width="34" height="0.95" fill="#8a8a8a"/><rect x="921" y="208.32" width="20" height="0.95" fill="#8ea21c"/><rect x="921" y="210.52" width="23" height="0.95" fill="#8a8a8a"/><rect x="921" y="213.52" width="23" height="0.95" fill="#8a8a8a"/><rect x="921" y="216.32" width="15" height="0.95" fill="#8a8a8a"/><rect x="937" y="216.32" width="19" height="0.95" fill="#7a8ea5"/><rect x="922" y="218.52" width="13" height="0.95" fill="#8a8a8a"/><rect x="922" y="220.52" width="8" height="0.95" fill="#a44a40"/><rect x="931" y="220.52" width="22" height="0.95" fill="#a0952a"/><rect x="922" y="222.02" width="22" height="0.95" fill="#8a8a8a"/><rect x="922" y="223.52" width="11" height="0.95" fill="#8a8a8a"/><rect x="922" y="226.02" width="13" height="0.95" fill="#8a8a8a"/><rect x="921" y="228.52" width="32" height="0.95" fill="#8ea21c"/><rect x="921" y="230.32" width="25" height="0.95" fill="#7a8ea5"/><rect x="921" y="231.82" width="15" height="0.95" fill="#3a7fb0"/><rect x="921" y="233.52" width="11" height="0.95" fill="#8a8a8a"/><rect x="918" y="236.02" width="6" height="0.95" fill="#a8a8a8"/><rect x="925" y="236.02" width="11" height="0.95" fill="#8a8a8a"/><rect x="918" y="238.40" width="53" height="0.8" fill="#8a9e1a"/><rect x="918" y="239.52" width="42" height="0.95" fill="#8ea21c"/><rect x="918" y="242.02" width="50" height="0.95" fill="#8ea21c"/><rect x="918" y="244.10" width="53" height="0.8" fill="#8a9e1a"/><rect x="918" y="246.52" width="20" height="0.95" fill="#8ea21c"/><rect x="918" y="248.02" width="8" height="0.95" fill="#a8a8a8"/><rect x="927" y="248.02" width="13" height="0.95" fill="#a44a40"/><rect x="942" y="248.02" width="11" height="0.95" fill="#8a8a8a"/><rect x="921" y="249.52" width="11" height="0.95" fill="#8ea21c"/><rect x="918" y="251.02" width="9" height="0.95" fill="#a8a8a8"/><rect x="928" y="251.02" width="9" height="0.95" fill="#8a8a8a"/><rect x="918" y="253.60" width="52" height="0.8" fill="#8a9e1a"/><rect x="918" y="255.02" width="38" height="0.95" fill="#8ea21c"/><rect x="918" y="257.02" width="47" height="0.95" fill="#8ea21c"/><rect x="918" y="258.52" width="15" height="0.95" fill="#8ea21c"/><rect x="918" y="262.10" width="52" height="0.8" fill="#8a9e1a"/><rect x="918" y="264.52" width="19" height="0.95" fill="#8ea21c"/><rect x="918" y="266.02" width="9" height="0.95" fill="#a8a8a8"/><rect x="928" y="266.02" width="12" height="0.95" fill="#a44a40"/><rect x="941" y="266.02" width="13" height="0.95" fill="#8a8a8a"/><rect x="918" y="268.32" width="9" height="0.95" fill="#a8a8a8"/><rect x="928" y="268.32" width="10" height="0.95" fill="#3a7fb0"/><rect x="918" y="271.02" width="15" height="0.95" fill="#8ea21c"/><rect x="918" y="273.02" width="9" height="0.95" fill="#a8a8a8"/><rect x="928" y="273.02" width="12" height="0.95" fill="#a44a40"/><rect x="941" y="273.02" width="7" height="0.95" fill="#8a8a8a"/><rect x="921" y="275.82" width="9" height="0.95" fill="#a44a40"/><rect x="931" y="275.82" width="41" height="0.95" fill="#a0952a"/><rect x="918" y="278.12" width="8" height="0.95" fill="#a8a8a8"/><rect x="928" y="278.12" width="4" height="0.95" fill="#8a8a8a"/><rect x="917" y="281.52" width="4" height="0.95" fill="#9a7a7a"/><rect x="924" y="281.52" width="14" height="0.95" fill="#8ea21c"/><rect x="926.3" y="40" width="0.6" height="7.5" fill="#7a8c18"/><rect x="917" y="49" width="0.6" height="23" fill="#7a8c18"/><rect x="912" y="191" width="2" height="33.5" fill="#2f7fb5"/><rect x="912" y="225.8" width="2" height="1" fill="#2f7fb5"/><rect x="912" y="228.8" width="2" height="8.2" fill="#2f7fb5"/></g></svg>
<div id="ruler">
  <div style="position:absolute;left:0;top:0;width:1px;height:699px;background:#2e2e2e"></div>
  <div style="position:absolute;left:1px;top:94px;width:6px;height:161.5px;background:#3a3a3a"></div>
  <div style="position:absolute;left:1px;top:121px;width:6px;height:1.6px;background:#a8a8a8"></div>
  <div style="position:absolute;left:3.5px;top:278.3px;width:3.5px;height:5px;background:#8f4628"></div>
  <div style="position:absolute;left:1px;top:336.8px;width:3px;height:72.5px;background:#1d6f8c"></div>
  <div style="position:absolute;left:1px;top:412.4px;width:3px;height:3.9px;background:#1d6f8c"></div>
  <div style="position:absolute;left:1px;top:419px;width:3px;height:18.2px;background:#1d6f8c"></div>
  <div style="position:absolute;left:4.5px;top:348.5px;width:2.5px;height:4px;background:#8a4426"></div>
  <div style="position:absolute;left:4.5px;top:358.5px;width:2.5px;height:6px;background:#8a4426"></div>
  <div style="position:absolute;left:4.5px;top:369.6px;width:2.5px;height:4px;background:#8a4426"></div>
  <div style="position:absolute;left:4.5px;top:378px;width:2.5px;height:4px;background:#8a4426"></div>
  <div style="position:absolute;left:4.5px;top:384.6px;width:2.5px;height:4px;background:#8a4426"></div>
  <div style="position:absolute;left:4.5px;top:390.8px;width:2.5px;height:4px;background:#8a4426"></div>
</div>
<div style="position:absolute;left:208px;top:158px;width:6px;height:19px">
  <div style="position:absolute;left:2.8px;top:0;width:2.2px;height:7px;background:#b4b4b0"></div>
  <div style="position:absolute;left:1px;top:7px;width:4px;height:10.5px;background:#a8a8a4"></div>
  <div style="position:absolute;left:0;top:17px;width:4.5px;height:1.6px;background:#b0c0d0;border-radius:1px"></div>
</div>

</body></html>
